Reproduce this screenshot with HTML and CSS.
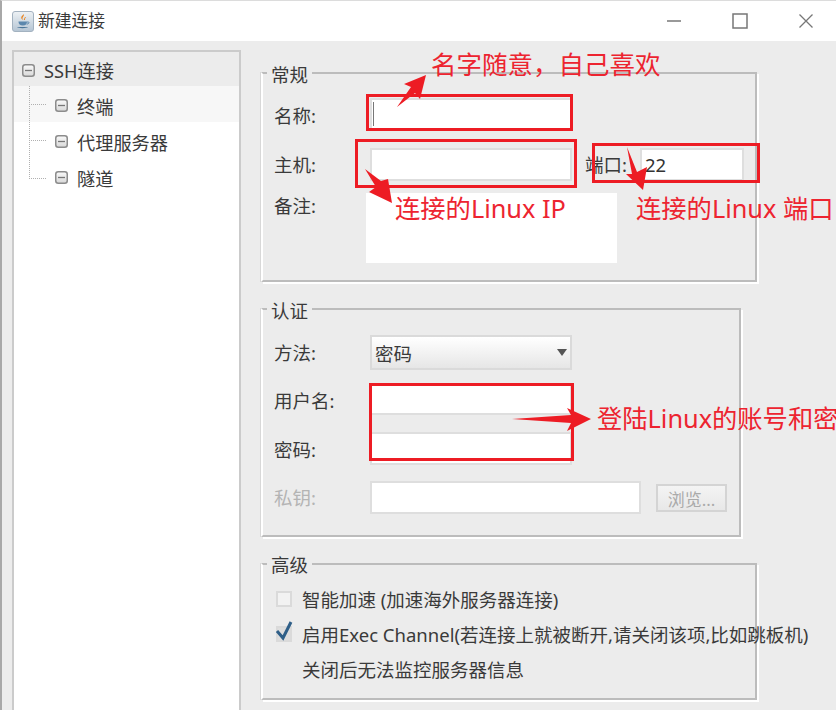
FILE: index.html
```html
<!DOCTYPE html>
<html lang="zh">
<head>
<meta charset="utf-8">
<title>新建连接</title>
<link rel="stylesheet" href="styles.css">
</head>
<body>
<svg class="defs" width="0" height="0" aria-hidden="true">
  <defs>
    <linearGradient id="hg" x1="0" y1="0" x2="0" y2="1"><stop offset="0" stop-color="#fafafa"/><stop offset="1" stop-color="#d8d8d8"/></linearGradient>
    <symbol id="handle" viewBox="0 0 13 13">
      <rect x="0.75" y="0.75" width="11.5" height="11.5" rx="2.5" fill="url(#hg)" stroke="#8c8c8c" stroke-width="1.5"/>
      <path d="M3 6.5h7" stroke="#777" stroke-width="1.3"/>
    </symbol>
  </defs>
</svg>
<div class="window">
  <header class="titlebar">
    <svg class="app-icon" width="22" height="21" viewBox="0 0 22 21">
      <defs><linearGradient id="ig" x1="0" y1="0" x2="0" y2="1"><stop offset="0" stop-color="#eef2f5"/><stop offset="1" stop-color="#b4c4d3"/></linearGradient></defs>
      <rect x="0.5" y="0.5" width="21" height="20" rx="2.5" fill="url(#ig)" stroke="#a3b2c0"/>
      <path d="M11.5 3c1.5 2-1.8 3-.8 5.2.3.6.8 1 .8 1-1.700-.7-2.900-2-2-3.600.6-1 1.800-1.500 2-2.600z" fill="#e8821e"/>
      <path d="M13.500 6c-.2 1-1.500 1.500-1 3" stroke="#e8821e" fill="none"/>
      <path d="M6.500 10.500h8.500c0 2.800-1.300 4-4.200 4s-4.300-1.200-4.300-4z" fill="#5b87ad"/>
      <path d="M15 11h1.500c.8 0 .8 2-1.800 2.200" stroke="#5b87ad" fill="none"/>
      <path d="M5 16h11c-1 1.500-10 1.500-11 0z" fill="#4a7598"/>
    </svg>
    <span class="title">新建连接</span>
    <div class="win-controls">
      <svg width="16" height="16" viewBox="0 0 16 16"><path d="M1 8h14" stroke="#777" stroke-width="1.500"/></svg>
      <svg width="16" height="16" viewBox="0 0 16 16"><rect x="1" y="1" width="14" height="14" fill="none" stroke="#777" stroke-width="1.500"/></svg>
      <svg width="16" height="16" viewBox="0 0 16 16"><path d="M1.500 1.500l13 13M14.500 1.500l-13 13" stroke="#777" stroke-width="1.300"/></svg>
    </div>
  </header>
  <div class="content">
    <nav class="tree">
      <div class="tree-row root"><svg class="handle" width="13" height="13"><use href="#handle"/></svg><span>SSH连接</span></div>
      <div class="tree-row child hover"><i class="connector"></i><svg class="handle" width="13" height="13"><use href="#handle"/></svg><span>终端</span></div>
      <div class="tree-row child"><i class="connector"></i><svg class="handle" width="13" height="13"><use href="#handle"/></svg><span>代理服务器</span></div>
      <div class="tree-row child last"><i class="connector"></i><svg class="handle" width="13" height="13"><use href="#handle"/></svg><span>隧道</span></div>
    </nav>
    <main class="form">
      <section class="group general">
        <h2 class="legend">常规</h2>
        <div class="row name-row"><label class="label low">名称:</label><div class="input name-input"><i class="caret"></i></div></div>
        <div class="row host-row"><label class="label high">主机:</label><div class="input host-input"></div><label class="port-label high">端口:</label><div class="input port-input">22</div></div>
        <div class="row notes-row"><label class="label notes-label">备注:</label><div class="notes"></div></div>
      </section>
      <section class="group auth">
        <h2 class="legend">认证</h2>
        <div class="row method-row"><label class="label high">方法:</label><div class="select"><span>密码</span><svg width="10" height="7" viewBox="0 0 10 7"><path d="M0 0h10L5 7z" fill="#555"/></svg></div></div>
        <div class="row user-row"><label class="label">用户名:</label><div class="input host-input"></div></div>
        <div class="row pass-row"><label class="label">密码:</label><div class="input host-input"></div></div>
        <div class="row key-row"><label class="label disabled high">私钥:</label><div class="input key-input"></div><button class="browse" type="button" disabled>浏览...</button></div>
      </section>
      <section class="group advanced">
        <h2 class="legend">高级</h2>
        <div class="check-row first"><span class="checkbox"></span><span>智能加速 (加速海外服务器连接)</span></div>
        <div class="check-row"><span class="checkbox checked"><svg width="18" height="20" viewBox="0 0 18 20"><path d="M2 10l6 7L16 1" fill="none" stroke="#2f5f88" stroke-width="3"/></svg></span><span>启用Exec Channel(若连接上就被断开,请关闭该项,比如跳板机)</span></div>
        <div class="check-row note"><span>关闭后无法监控服务器信息</span></div>
      </section>
    </main>
  </div>
</div>
<div class="box box-name"></div>
<div class="box box-host"></div>
<div class="box box-port"></div>
<div class="box box-cred"></div>
<svg class="arrows" width="836" height="710" viewBox="0 0 836 710" aria-hidden="true">
  <path d="M397 107L411 87 404 84 426 75 420 99 415 93Z"/>
  <path d="M365 169L381 181 388 179 392 203 369 192 376 187Z"/>
  <path d="M627 147L637 172 647 167 643 190 626 174 632 174Z"/>
  <path d="M512 419L571 415 567 408 591 419 567 431 571 423Z"/>
</svg>
<div class="note-text n-name">名字随意，自己喜欢</div>
<div class="note-text n-ip">连接的Linux IP</div>
<div class="note-text n-port">连接的Linux 端口</div>
<div class="note-text n-cred">登陆Linux的账号和密</div>
</body>
</html>
```
FILE: styles.css
```css
* { box-sizing: border-box; }
html, body { margin: 0; padding: 0; width: 836px; height: 710px; overflow: hidden; }
body { position: relative; font-family: "Noto Sans", "Noto Sans CJK SC", sans-serif; font-size: 18.500px; color: #3a3a3a; background: #ececec; }
.defs { position: absolute; }
.window { height: 710px; display: flex; flex-direction: column; border-left: 2px solid #a8a8a8; border-top: 1px solid #dcdcdc; background: #ececec; }
.titlebar { height: 40px; flex: none; display: flex; align-items: center; background: #fff; padding: 0 0 2px 10px; }
.app-icon { margin-top: 2px; }
.title { margin-left: 4px; font-size: 16.800px; }
.win-controls { margin-left: auto; display: flex; align-items: center; gap: 50px; padding: 2px 22px 0 0; }
.content { flex: 1; display: flex; min-height: 0; }
.tree { width: 229px; margin: 9px 0 -2px 10px; background: #fff; border: 2px solid #cbcbcb; flex: none; font-size: 18.200px; }
.tree-row { display: flex; align-items: center; height: 36px; }
.tree-row.root { height: 34px; background: #ececec; padding: 2px 0 0 8px; }
.tree-row.hover { background: #f7f7f7; }
.tree-row.child { padding: 0 0 0 15px; }
.tree-row.child span, .tree-row.child .handle { margin-top: 3px; }
.handle { flex: none; margin-right: 9px; }
.connector { width: 26px; align-self: stretch; flex: none;
  background:
    repeating-linear-gradient(to bottom, #b0b0b0 0 1px, transparent 1px 2px) left top / 1px 100% no-repeat,
    repeating-linear-gradient(to right, #b0b0b0 0 1px, transparent 1px 2px) left 50% / 18px 1px no-repeat; }
.tree-row.last .connector { background-size: 1px 56%, 18px 1px; background-position: left top, left 56%; }
.form { flex: 1; padding: 31px 0 0 20px; display: flex; flex-direction: column; gap: 26px; }
.group { border: 2px solid #bcbcbc; border-left-color: #fff; box-shadow: 2px 2px 0 #fff, -1px 0 0 #d8d8d8; padding-left: 11px; flex: none; }
.general { width: 496px; height: 210px; }
.auth { width: 480px; height: 229px; }
.advanced { width: 496px; height: 137px; }
.legend { width: fit-content; height: 24px; margin: -11px 0 0 -7px; padding: 0 4px; background: #ececec; font-size: 18.500px; font-weight: 400; line-height: 24px; }
.advanced .legend { margin-top: -12px; }
.row { display: flex; align-items: center; }
.label { width: 96px; flex: none; }
.low { padding-top: 2px; }
.high { padding-bottom: 2px; }
.disabled { color: #b4b4b4; }
.input { background: #fff; border: 2px solid #dedede; height: 100%; }
.name-row { height: 32px; margin-top: 11px; }
.host-row { height: 33px; margin-top: 18px; }
.notes-row { height: 70px; margin-top: 12px; align-items: flex-start; }
.notes-label { line-height: 26px; }
.notes { width: 251px; height: 70px; margin-left: -4px; background: #fff; }
.name-input, .host-input { width: 202px; }
.name-input { display: flex; align-items: center; padding-left: 1px; }
.caret { width: 1px; height: 24px; background: #777; }
.port-label { margin-left: 13px; width: 55px; flex: none; }
.port-input { width: 104px; padding-left: 3px; line-height: 29px; color: #333; }
.method-row { height: 35px; margin-top: 12px; }
.select { width: 202px; height: 100%; border: 2px solid #dadada; background: linear-gradient(#fff, #e6e6e6); display: flex; align-items: center; justify-content: space-between; padding: 0 3px 0 3px; }
.user-row { height: 31px; margin-top: 14px; }
.pass-row { height: 33px; margin-top: 17px; }
.key-row { height: 33px; margin-top: 16px; }
.key-input { width: 271px; }
.browse { width: 71px; height: 28px; margin-left: 15px; padding: 0; border: 2px solid #d4d4d4; background: linear-gradient(#f4f4f4, #e8e8e8); font: inherit; font-size: 17px; color: #aaa; }
.check-row { height: 35px; display: flex; align-items: center; padding-left: 2px; white-space: nowrap; }
.check-row.first { margin-top: 4px; }
.check-row.note { padding-left: 28px; }
.checkbox { width: 16px; height: 16px; flex: none; margin-right: 10px; border: 2px solid #dadada; background: #f2f2f2; position: relative; }
.checkbox svg { position: absolute; left: -3px; top: -7px; }
.checked { background: #dedede; }
.box { position: absolute; border: 3px solid #ed1c24; }
.box-name { left: 366px; top: 94px; width: 207px; height: 37px; }
.box-host { left: 355px; top: 139px; width: 222px; height: 49px; }
.box-port { left: 592px; top: 143px; width: 168px; height: 40px; }
.box-cred { left: 369px; top: 383px; width: 205px; height: 78px; }
.arrows { position: absolute; left: 0; top: 0; }
.arrows path { fill: #ed1c24; }
.note-text { position: absolute; white-space: nowrap; color: #ed2430; font-size: 25.300px; line-height: 36px; }
.n-name { left: 431px; top: 46px; font-size: 25.500px; }
.n-ip { left: 395px; top: 190px; }
.n-port { left: 636px; top: 190px; }
.n-cred { left: 597px; top: 400px; }
```
